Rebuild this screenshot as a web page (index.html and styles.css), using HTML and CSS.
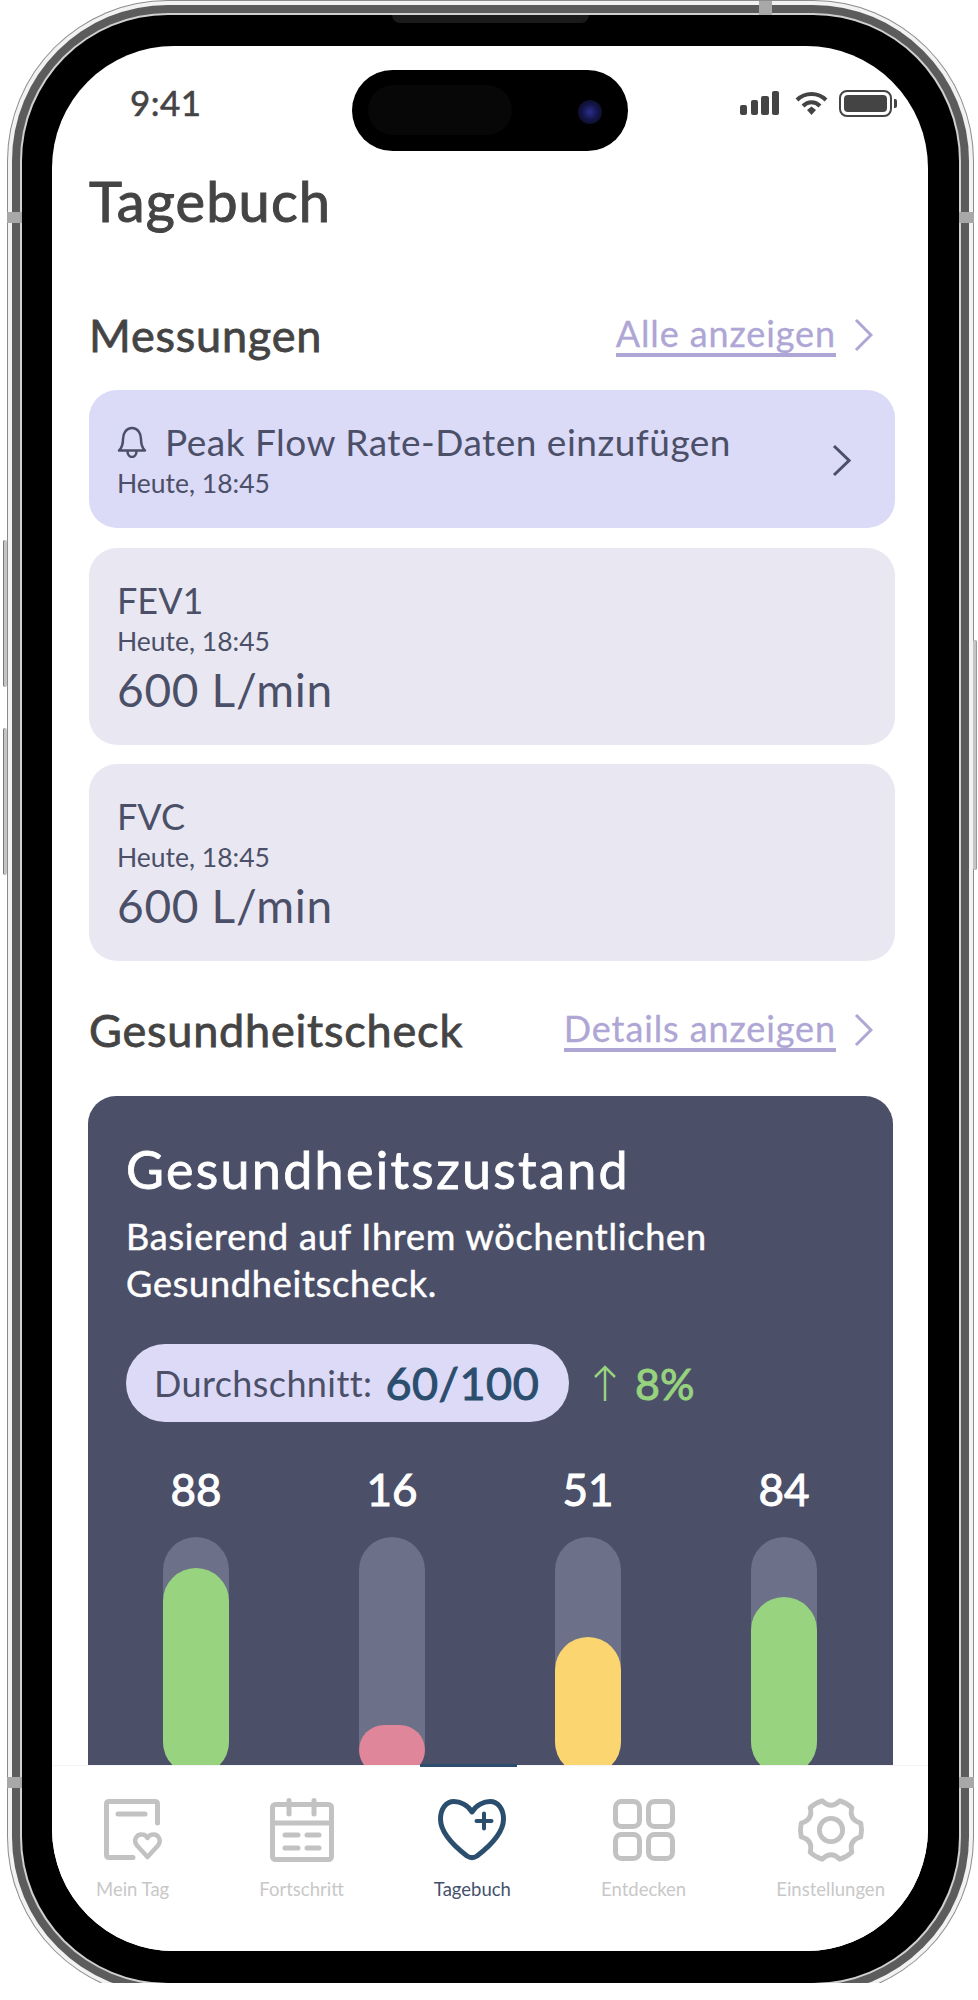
FILE: index.html
```html
<!DOCTYPE html>
<html lang="de">
<head>
  <meta charset="UTF-8">
  <meta name="viewport" content="width=device-width, initial-scale=1.0">
  <title>Tagebuch</title>
  <link rel="stylesheet" href="styles.css">
</head>
<body>

<div class="phone">
  <!-- Frame details -->
  <span class="speaker"></span>
  <span class="side-btn btn-left-1"></span>
  <span class="side-btn btn-left-2"></span>
  <span class="side-btn btn-right"></span>
  <span class="antenna ant-left"></span>
  <span class="antenna ant-right"></span>
  <span class="antenna ant-left-low"></span>
  <span class="antenna ant-right-low"></span>
  <span class="antenna-h ant-top"></span>
  <span class="antenna-h ant-bottom"></span>

  <div class="screen">
    <!-- Dynamic Island -->
    <div class="island">
      <span class="island-inner"></span>
      <span class="camera"></span>
    </div>

    <!-- Status Bar -->
    <div class="status">
      <span class="time">9:41</span>
      <div class="status-icons">
        <svg class="signal" width="39" height="24" viewBox="0 0 39 24" fill="#444">
          <rect x="0" y="14" width="7" height="10" rx="2"/>
          <rect x="11" y="9" width="7" height="15" rx="2"/>
          <rect x="21" y="5" width="8" height="19" rx="2"/>
          <rect x="32" y="0" width="7" height="24" rx="2"/>
        </svg>
        <svg class="wifi" width="33" height="24" viewBox="0 0 33 24" fill="none" stroke="#444" stroke-width="4">
          <path d="M2 9 C10 1 23 1 31 9"/>
          <path d="M8 15 C13 10 20 10 25 15"/>
          <path d="M12 19 L16.500 15.500 L21 19 L16.500 24 Z" fill="#444" stroke="none"/>
        </svg>
        <div class="battery"><span class="battery-fill"></span></div>
        <span class="battery-nub"></span>
      </div>
    </div>

    <main class="content">
      <h1 class="page-title">Tagebuch</h1>

      <!-- Messungen -->
      <div class="section-head">
        <h2>Messungen</h2>
        <a class="more" href="#alle">
          <span>Alle anzeigen</span>
          <svg class="more-arrow" width="19" height="34" viewBox="0 0 19 34" fill="none" stroke="#aea6d4" stroke-width="3">
            <path d="M2 2 L17 17 L2 32"/>
          </svg>
        </a>
      </div>

      <div class="card card-alert">
        <div>
          <div class="card-title">
            <svg width="30" height="32" viewBox="0 0 30 32" fill="none" stroke="#4b5068" stroke-width="2.500" stroke-linejoin="round">
              <path d="M2 24.500 C6 21 6 17 6 13 C6 7 9.500 2 15 2 C20.500 2 24 7 24 13 C24 17 24 21 28 24.500 Z"/>
              <path d="M10.500 25 C10.500 33 19.500 33 19.500 25"/>
            </svg>
            <span>Peak Flow Rate-Daten einzufügen</span>
          </div>
          <p class="card-date">Heute, 18:45</p>
        </div>
        <svg width="19" height="33" viewBox="0 0 19 33" fill="none" stroke="#4b5068" stroke-width="3">
          <path d="M2 2 L17 16.500 L2 31"/>
        </svg>
      </div>

      <div class="card">
        <div class="card-title">FEV1</div>
        <p class="card-date">Heute, 18:45</p>
        <p class="card-value">600 L/min</p>
      </div>

      <div class="card">
        <div class="card-title">FVC</div>
        <p class="card-date">Heute, 18:45</p>
        <p class="card-value">600 L/min</p>
      </div>

      <!-- Gesundheitscheck -->
      <div class="section-head section-head-check">
        <h2>Gesundheitscheck</h2>
        <a class="more" href="#details">
          <span>Details anzeigen</span>
          <svg class="more-arrow" width="19" height="34" viewBox="0 0 19 34" fill="none" stroke="#aea6d4" stroke-width="3">
            <path d="M2 2 L17 17 L2 32"/>
          </svg>
        </a>
      </div>

      <section class="health">
        <h3>Gesundheitszustand</h3>
        <p class="health-text">Basierend auf Ihrem wöchentlichen<br>Gesundheitscheck.</p>

        <div class="score-row">
          <div class="score-pill">
            <span class="score-label">Durchschnitt:</span>
            <span class="score-value">60/100</span>
          </div>
          <svg width="24" height="36" viewBox="0 0 24 36" fill="none" stroke="#97d27e" stroke-width="2.500">
            <path d="M12 36 L12 2 M2 12 L12 2 L22 12"/>
          </svg>
          <span class="score-trend">8%</span>
        </div>

        <div class="bars">
          <div class="bar">
            <span class="bar-num">88</span>
            <div class="track"><div class="fill fill-green" style="height: 87%"></div></div>
          </div>
          <div class="bar">
            <span class="bar-num">16</span>
            <div class="track"><div class="fill fill-pink" style="height: 21%"></div></div>
          </div>
          <div class="bar">
            <span class="bar-num">51</span>
            <div class="track"><div class="fill fill-yellow" style="height: 58%"></div></div>
          </div>
          <div class="bar">
            <span class="bar-num">84</span>
            <div class="track"><div class="fill fill-green" style="height: 75%"></div></div>
          </div>
        </div>
      </section>
    </main>

    <!-- Tab Bar -->
    <nav class="tabs">
      <span class="tab-marker"></span>
      <a class="tab" href="#tag">
        <svg width="58" height="62" viewBox="0 0 58 62" fill="none" stroke="#c2c2c2" stroke-width="5" stroke-linecap="round" stroke-linejoin="round">
          <path d="M29 58.500 L5 58.500 Q2.500 58.500 2.500 56 L2.500 5 Q2.500 2.500 5 2.500 L51 2.500 Q53.500 2.500 53.500 5 L53.500 24"/>
          <path d="M14 15 L41 15"/>
          <path d="M43.500 58 L33 46.500 C28.500 41 33 35 38 35.500 C40.500 35.500 42.500 37 43.500 39 C44.500 37 46.500 35.500 49 35.500 C54 35 58 41 54 46.500 Z" stroke-width="4.500"/>
        </svg>
        <span>Mein Tag</span>
      </a>
      <a class="tab" href="#fortschritt">
        <svg width="64" height="64" viewBox="0 0 64 64" fill="none" stroke="#c2c2c2" stroke-width="5" stroke-linecap="round" stroke-linejoin="round">
          <rect x="2.500" y="6.500" width="59" height="55" rx="3"/>
          <path d="M2.500 25 L61.500 25"/>
          <path d="M19 2.500 L19 16 M44 2.500 L44 16"/>
          <path d="M15 37 L28 37 M37 37 L49 37 M15 50 L28 50 M37 50 L49 50"/>
        </svg>
        <span>Fortschritt</span>
      </a>
      <a class="tab tab-active" href="#tagebuch">
        <svg width="68" height="62" viewBox="0 0 68 62" fill="none" stroke="#2b4e6e" stroke-width="5" stroke-linecap="round" stroke-linejoin="round">
          <path d="M34 13 C30 6 22 2.500 16 2.500 C8 2.500 2.500 10 2.500 20 C2.500 33 16 47 29 57 C32 59 36 59 39 57 C52 47 65.500 33 65.500 20 C65.500 10 60 2.500 52 2.500 C46 2.500 38 6 34 13 Z"/>
          <path d="M46 14.500 L46 29.500 M38.500 22 L53.500 22" stroke-width="4"/>
        </svg>
        <span>Tagebuch</span>
      </a>
      <a class="tab" href="#entdecken">
        <svg width="62" height="62" viewBox="0 0 62 62" fill="none" stroke="#c2c2c2" stroke-width="5">
          <rect x="2.500" y="2.500" width="24" height="25" rx="6"/>
          <rect x="35.500" y="2.500" width="24" height="25" rx="6"/>
          <rect x="2.500" y="35.500" width="24" height="24" rx="6"/>
          <rect x="35.500" y="35.500" width="24" height="24" rx="6"/>
        </svg>
        <span>Entdecken</span>
      </a>
      <a class="tab" href="#einstellungen">
        <svg width="68" height="66" viewBox="0 0 68 66" fill="none" stroke="#c2c2c2" stroke-width="5" stroke-linejoin="round">
          <path d="M64.700 25.900 A31.500 31.500 0 0 1 64.700 40.100 Q52.200 43.500 55.500 56 A31.500 31.500 0 0 1 43.200 63.100 Q34 54 24.800 63.100 A31.500 31.500 0 0 1 12.500 56 Q15.800 43.500 3.300 40.100 A31.500 31.500 0 0 1 3.300 25.900 Q15.800 22.500 12.500 10 A31.500 31.500 0 0 1 24.800 2.900 Q34 12 43.200 2.900 A31.500 31.500 0 0 1 55.500 10 Q52.200 22.500 64.700 25.900 Z"/>
          <circle cx="34" cy="33" r="12"/>
        </svg>
        <span>Einstellungen</span>
      </a>
    </nav>
  </div>
</div>

</body>
</html>
```

FILE: styles.css
```css
* { box-sizing: border-box; }
body { margin: 0; background: #fff; font-family: "Lato", "Noto Sans", sans-serif; color: #444; }
h1, h2, h3, p { margin: 0; }
a { text-decoration: none; color: inherit; }

/* Phone frame */
.phone {
  position: relative;
  width: 937px;
  height: 1968px;
  margin: 15px 0 0 22px;
  padding: 31px 31px 32px 30px;
  background: #000;
  border-radius: 146px;
  box-shadow: 0 0 0 2px #d0d0d0, 0 0 0 10px #5c5c5c, 0 0 0 14px #f2f2f2, 0 0 0 15px #8c8c8c;
}
.speaker { position: absolute; left: 370px; top: 0; width: 197px; height: 8px; background: #1a1a1a; border-radius: 0 0 8px 8px; }
.side-btn { position: absolute; width: 4px; background: #c4c4c4; border-left: 1px solid #777; border-radius: 2px; }
.btn-left-1 { left: -19px; top: 525px; height: 147px; }
.btn-left-2 { left: -19px; top: 713px; height: 147px; }
.btn-right { left: 951px; top: 625px; height: 230px; border-left: 0; border-right: 1px solid #999; }
.antenna { position: absolute; width: 15px; height: 11px; background: #a8a8a8; }
.ant-left { left: -15px; top: 197px; }
.ant-right { left: 937px; top: 197px; }
.ant-left-low { left: -15px; top: 1762px; }
.ant-right-low { left: 937px; top: 1762px; }
.antenna-h { position: absolute; width: 13px; height: 14px; background: #a8a8a8; }
.ant-top { left: 737px; top: -14px; }
.ant-bottom { left: 188px; top: 1968px; }

.screen {
  position: relative;
  width: 876px;
  height: 1905px;
  background: #fff;
  border-radius: 122px;
  overflow: hidden;
}

/* Dynamic Island */
.island {
  position: absolute;
  left: 300px;
  top: 24px;
  width: 276px;
  height: 81px;
  background: #000;
  border-radius: 41px;
  z-index: 5;
}
.island-inner { position: absolute; left: 16px; top: 15px; width: 144px; height: 50px; background: #070707; border-radius: 25px; }
.camera { position: absolute; left: 226px; top: 30px; width: 24px; height: 24px; background: radial-gradient(circle, #2a2f8c 0, #14164a 45%, #08080f 100%); border-radius: 50%; }

/* Status bar */
.status { display: flex; justify-content: space-between; align-items: center; height: 112px; padding: 0 31px 0 78px; }
.time { font-size: 35px; letter-spacing: 0.5px; -webkit-text-stroke: 0.6px #444; color: #444; }
.status-icons { display: flex; align-items: center; padding-top: 2px; }
.signal { margin-right: 16px; }
.wifi { margin-right: 11px; }
.battery { width: 53px; height: 27px; padding: 3px; border: 2px solid #444; border-radius: 8px; }
.battery-fill { display: block; height: 100%; background: #444; border-radius: 4px; }
.battery-nub { width: 3px; height: 9px; margin-left: 2px; background: #444; border-radius: 0 2px 2px 0; }

/* Content */
.content { padding: 0 33px 0 37px; }
.page-title { font-size: 56px; font-weight: 400; line-height: 64px; letter-spacing: 1.100px; -webkit-text-stroke: 1px #444; margin-top: 11px; color: #444; }
.section-head { display: flex; justify-content: space-between; align-items: center; height: 52px; margin: 76px 0 29px; padding-right: 22px; }
.section-head h2 { font-size: 45px; font-weight: 400; letter-spacing: 0.8px; -webkit-text-stroke: 0.8px #444; color: #444; }
.more { display: flex; align-items: center; gap: 18px; font-size: 36px; letter-spacing: 0.9px; -webkit-text-stroke: 0.3px #aea6d4; color: #aea6d4; }
.more span { border-bottom: 4px solid #aea6d4; line-height: 40px; }
.section-head-check { margin: 43px 0 40px; }

.card { background: #e9e8f2; border-radius: 28px; padding: 30px 28px 0; height: 197px; margin-bottom: 19px; color: #4b5068; }
.card-alert { display: flex; justify-content: space-between; align-items: center; height: 138px; margin-bottom: 20px; background: #dbdaf7; padding: 2px 44px 0 28px; }
.card-title { display: flex; align-items: center; gap: 18px; font-size: 36px; line-height: 44px; }
.card-title span { font-size: 37px; letter-spacing: 0.5px; }
.card-date { font-size: 26.500px; line-height: 34px; margin-top: 2px; }
.card-value { font-size: 46px; line-height: 56px; margin-top: 4px; letter-spacing: 0.7px; }

/* Health card */
.health { width: 805px; height: 800px; margin-left: -1px; padding: 41px 38px; background: #4b4f68; border-radius: 28px; color: #fff; }
.health h3 { font-size: 52px; font-weight: 400; line-height: 64px; letter-spacing: 2.300px; -webkit-text-stroke: 0.8px #fff; }
.health-text { font-size: 36px; line-height: 47px; letter-spacing: 0.8px; -webkit-text-stroke: 0.5px #fff; margin-top: 12px; }
.score-row { display: flex; align-items: center; margin-top: 37px; }
.score-pill { display: flex; align-items: center; gap: 13px; height: 78px; width: 443px; padding: 0 28px; background: #dcdaf7; border-radius: 39px; }
.score-label { font-size: 36px; letter-spacing: 0.4px; color: #4b5068; }
.score-value { font-size: 45px; letter-spacing: 0.5px; -webkit-text-stroke: 1px #2b4e6e; color: #2b4e6e; }
.score-row svg { margin-left: 24px; }
.score-trend { margin-left: 18px; font-size: 43px; -webkit-text-stroke: 1px #97d27e; color: #97d27e; }

.bars { display: flex; gap: 130px; margin: 39px 0 0 37px; }
.bar { display: flex; flex-direction: column; align-items: center; width: 66px; }
.bar-num { font-size: 44px; line-height: 56px; -webkit-text-stroke: 1px #fff; }
.track { position: relative; width: 66px; height: 238px; margin-top: 20px; background: #6c7189; border-radius: 33px; }
.fill { position: absolute; left: 0; right: 0; bottom: 0; border-radius: 33px; }
.fill-green { background: #98d37f; }
.fill-pink { background: #e0869a; }
.fill-yellow { background: #fbd570; }

/* Tab bar */
.tabs {
  position: absolute;
  left: 0;
  right: 0;
  bottom: 0;
  height: 186px;
  display: flex;
  justify-content: space-between;
  padding: 32px 43px 0 44px;
  background: #fff;
  border-top: 1px solid #f4f4f4;
}
.tab-marker { position: absolute; left: 368px; top: -2px; width: 97px; height: 3px; background: #2b4e6e; }
.tab { display: flex; flex-direction: column; align-items: center; font-size: 18.500px; color: #c8c8c8; }
.tab svg { height: 64px; margin-bottom: 16px; }
.tab-active { color: #44506b; }
```
